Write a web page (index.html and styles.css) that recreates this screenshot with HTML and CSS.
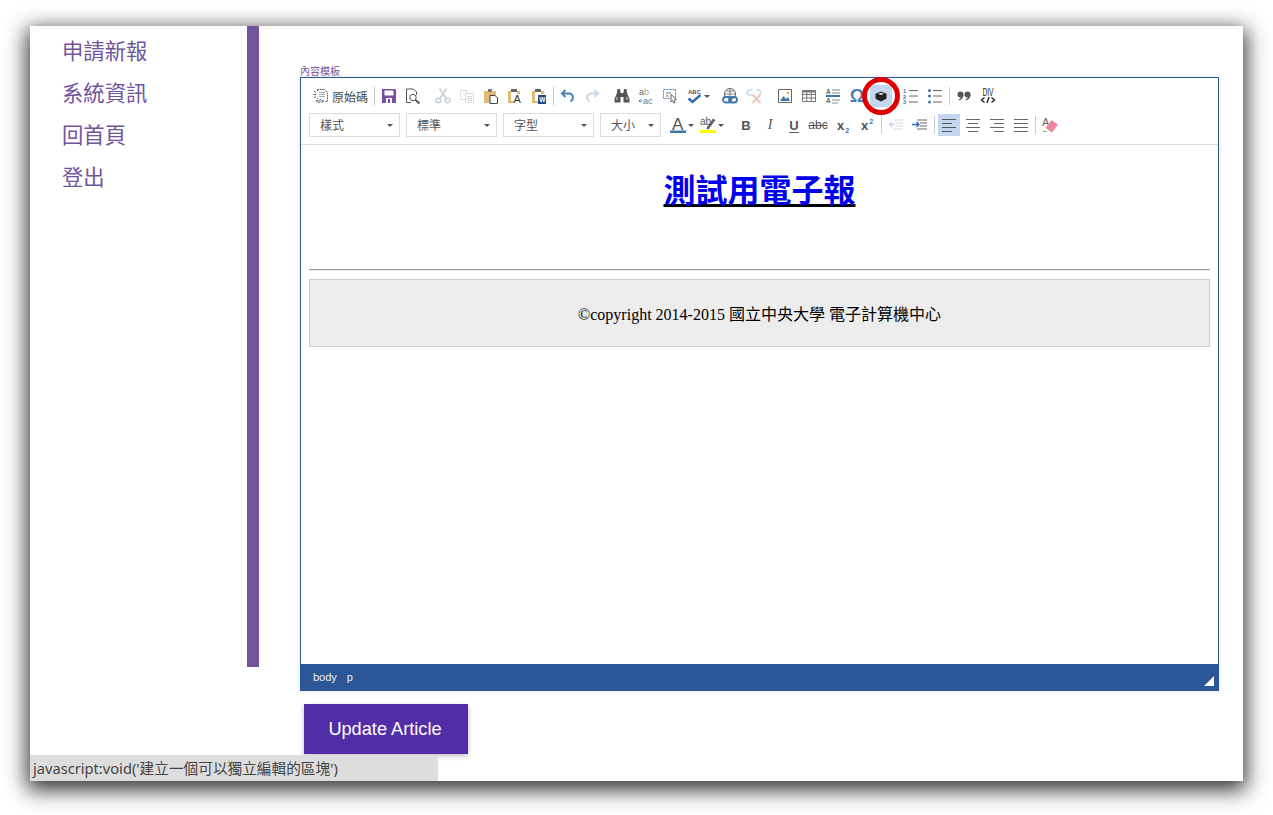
FILE: index.html
```html
<!DOCTYPE html>
<html lang="zh-Hant">
<head>
  <meta charset="UTF-8" />
  <title>內容模板</title>
  <link rel="stylesheet" href="styles.css">
</head>
<body>
  <div class="window">
    <nav class="sidebar">
      <a href="#">申請新報</a>
      <a href="#">系統資訊</a>
      <a href="#">回首頁</a>
      <a href="#">登出</a>
    </nav>

    <main class="main">
      <label class="field-label">內容模板</label>
      <div class="editor">
        <div class="toolbar">
          <div class="row">
            <span class="btn source">
              <svg width="16" height="16" viewBox="0 0 16 16" fill="none" stroke="#555"><path d="M4.500 1.500h7l3 3v9h-2M4.500 1.500v2M4.500 10v1" stroke-dasharray="1.500 .8"/><path d="M1 3l2 1.500M.5 6.500h3M1 10l2-1.500" stroke-width=".9"/><path d="M6.500 4.500h5M6.500 6.500h6M6.500 8.500h6" stroke-dasharray="1 1"/><text x="2.500" y="15" class="tiny" fill="#333" stroke="none">&lt;/&gt;</text></svg>
              <span>原始碼</span>
            </span>
            <i class="sep"></i>
            <span class="btn"><svg width="16" height="16" viewBox="0 0 16 16"><path d="M1 1h13l1 1v13H1z" fill="#7a4ea3"/><path d="M3.500 2.500h9v5h-9z" fill="#fff"/><path d="M5 10h6v5H5z" fill="#fff"/><path d="M7 11h2v4H7z" fill="#7a4ea3"/></svg></span>
            <span class="btn"><svg width="16" height="16" viewBox="0 0 16 16" fill="none" stroke="#555"><path d="M6 14.500H1.500V1h7l3 3v3"/><circle cx="8" cy="9.500" r="3.200"/><path d="M10.500 12l4 3.500" stroke-width="2"/></svg></span>

            <span class="gap g6"></span>
            <span class="btn"><svg width="16" height="16" viewBox="0 0 16 16" fill="none" stroke="#c3d2e2" stroke-width="1.500"><circle cx="3.500" cy="12.500" r="2.300"/><circle cx="12.500" cy="12.500" r="2.300"/><path d="M5 10.500L11.500 .5M11 10.500L4.500 .5" stroke="#d4d4d4" stroke-width="2"/></svg></span>
            <span class="btn"><svg width="16" height="16" viewBox="0 0 16 16" fill="#fff" stroke="#dcdcdc"><path d="M1.500 2.500h6v9h-6z"/><path d="M6.500 5.500h8v9h-8z"/><path d="M8 8.500h5M8 10.500h5M8 12.500h5" stroke="#c9d7e6"/></svg></span>
            <span class="btn"><svg width="16" height="16" viewBox="0 0 16 16"><path d="M1 3h12v12H1z" fill="#e2b976"/><path d="M5 1h4v3H5z" fill="#777"/><path d="M7 7.500h5l2.500 2.500v5.500H7z" fill="#fff" stroke="#444"/></svg></span>
            <span class="btn"><svg width="16" height="16" viewBox="0 0 16 16"><path d="M1 3h3v12H1zM1 13h6v2H1zM10 3h3v3h-3z" fill="#e2b976"/><path d="M1 3h12v1H1z" fill="#e2b976"/><path d="M4 1h6v3H4z" fill="#666"/><text x="6.500" y="15" class="letter" fill="#333">A</text></svg></span>
            <span class="btn"><svg width="16" height="16" viewBox="0 0 16 16"><path d="M1 3h3v12H1zM1 13h6v2H1zM10 3h3v3h-3z" fill="#e2b976"/><path d="M1 3h12v1H1z" fill="#e2b976"/><path d="M4 1h6v3H4z" fill="#666"/><path d="M7 7h8v9H7z" fill="#234a8b"/><text x="8.200" y="14" class="tiny-b" fill="#fff">W</text></svg></span>
            <i class="sep"></i>
            <span class="btn"><svg width="16" height="16" viewBox="0 0 16 16" fill="none" stroke="#4a80b8" stroke-width="2"><path d="M5.500 2L2 5.500 5.500 9"/><path d="M2.500 5.500H9a4 4 0 0 1 4 4c0 2-1 3-2.500 4"/></svg></span>
            <span class="btn"><svg width="16" height="16" viewBox="0 0 16 16" fill="none" stroke="#c7d8ea" stroke-width="2"><path d="M10.500 2L14 5.500 10.500 9"/><path d="M13.500 5.500H7a4 4 0 0 0-4 4c0 2 1 3 2.500 4"/></svg></span>

            <span class="gap g6"></span>
            <span class="btn"><svg width="16" height="16" viewBox="0 0 16 16" fill="#555"><path d="M3.500 1h2.500l.5 3.500v.5h3v-.5l.5-3.500h2.500l.5 4 2.500 6v3.500H9.500V9h-3v5.500H.5V11L3 5z"/><path d="M2 9h2v3H2zM12 9h2v3h-2z" fill="#999"/></svg></span>
            <span class="btn"><svg width="16" height="16" viewBox="0 0 16 16"><text x="1" y="7" class="swap" fill="#666">a<tspan fill="#aaa">b</tspan></text><text x="5" y="16" class="swap" fill="#4a80b8">ac</text><path d="M1 13h3.500M2.500 11.500L1 13l1.500 1.500" fill="none" stroke="#4a80b8"/></svg></span>
            <span class="btn"><svg width="16" height="16" viewBox="0 0 16 16" fill="none"><path d="M1.500 1.500h12v9h-12z" stroke="#4a80b8" stroke-dasharray="2 1"/><path d="M4 5h5M4 8h3" stroke="#777"/><path d="M9 6.500l5.500 5-2.500.5 1 2.500-1.500.500-1-2.500L9 14z" fill="#fff" stroke="#666"/></svg></span>
            <span class="btn wide"><svg width="16" height="16" viewBox="0 0 16 16" fill="none"><text x="1" y="6" class="tiny" fill="#555">ABC</text><path d="M1.500 10.500L5.500 14 13.500 7" stroke="#2f6db0" stroke-width="2.400"/></svg><b class="arrow"></b></span>

            <span class="gap g4"></span>
            <span class="btn"><svg width="16" height="16" viewBox="0 0 16 16" fill="none"><circle cx="8" cy="6" r="5.500" stroke="#666"/><path d="M2.500 6h11M8 .5v11M4 2.500c2 1 6 1 8 0" stroke="#666" stroke-width=".8"/><rect x="1" y="9" width="8" height="5.500" rx="2.700" fill="#fff" stroke="#3d76b0" stroke-width="1.800"/><rect x="7" y="9" width="8" height="5.500" rx="2.700" fill="none" stroke="#3d76b0" stroke-width="1.800"/></svg></span>
            <span class="btn"><svg width="16" height="16" viewBox="0 0 16 16" fill="none"><path d="M6.500 2H3.500a2.500 2.500 0 0 0 0 5H6M10 2h2.500a2.500 2.500 0 0 1 1 4.500" stroke="#c7d8ea" stroke-width="1.700"/><path d="M6.500 6.500l8 8.500M14.500 6.500l-8 8.500" stroke="#f2c6bd" stroke-width="2"/></svg></span>

            <span class="gap g7"></span>
            <span class="btn"><svg width="16" height="16" viewBox="0 0 16 16"><path d="M1.500 1.500h13v13h-13z" fill="#fff" stroke="#666"/><path d="M3 13l3.500-5 2.500 3 2-2 2 4z" fill="#3f78b2"/><circle cx="11" cy="5" r="1.500" fill="#e8b35c"/></svg></span>
            <span class="btn"><svg width="16" height="16" viewBox="0 0 16 16" fill="none" stroke="#777"><path d="M1.500 2.500h13v11h-13zM1.500 6.500h13M1.500 10h13M5.800 2.500v11M10.200 2.500v11"/><path d="M1.500 3.500h13" stroke-width="2"/></svg></span>
            <span class="btn"><svg width="16" height="16" viewBox="0 0 16 16" fill="none"><text x="1" y="6" class="tiny-b" fill="#666">A</text><path d="M7 2h8M7 5h8M7 12h8M7 15h6" stroke="#888"/><path d="M1 8h14" stroke="#3d76b0" stroke-width="2"/><text x="1" y="15" class="tiny-b" fill="#666">A</text></svg></span>
            <span class="btn omega">Ω</span>
            <span class="btn on">
              <svg width="16" height="16" viewBox="0 0 16 16"><path d="M8 3.500l5.500 2.200v5L8 13.500l-5.500-2.800v-5z" fill="#222"/><path d="M5 5.800L8 4.700l3 1.100-3 1.200z" fill="#dfe7f5"/></svg>
              <span class="marker"></span>
            </span>

            <span class="gap g6"></span>
            <span class="btn"><svg width="16" height="16" viewBox="0 0 16 16" fill="none"><text x="0" y="5" class="num" fill="#3d76b0">1</text><text x="0" y="10.500" class="num" fill="#3d76b0">2</text><text x="0" y="16" class="num" fill="#3d76b0">3</text><path d="M6 2.500h9M6 8h9M6 14h9" stroke="#666"/></svg></span>
            <span class="btn"><svg width="16" height="16" viewBox="0 0 16 16" fill="none"><path d="M6 2.500h9M6 8h9M6 14h9" stroke="#666"/><circle cx="2.500" cy="2.500" r="1.500" fill="#3d76b0"/><circle cx="2.500" cy="8" r="1.500" fill="#3d76b0"/><circle cx="2.500" cy="14" r="1.500" fill="#3d76b0"/></svg></span>
            <i class="sep"></i>
            <span class="btn"><svg width="16" height="16" viewBox="0 0 16 16" fill="#555"><circle cx="4.500" cy="6.500" r="3"/><circle cx="11.500" cy="6.500" r="3"/><path d="M7.500 6.500c0 3-1.500 5-4.500 6l-.5-1c1.500-.7 2.500-1.800 2.500-3zM14.500 6.500c0 3-1.500 5-4.500 6l-.5-1c1.500-.7 2.500-1.800 2.500-3z"/></svg></span>
            <span class="btn"><svg width="16" height="16" viewBox="0 0 16 16" fill="none" stroke="#222"><text x="2.500" y="7.500" class="div-label" fill="#222" stroke="none" textLength="11" lengthAdjust="spacingAndGlyphs">DIV</text><path d="M4.500 9.500L1.500 12l3 2.500M11.500 9.500l3 2.500-3 2.500" stroke-width="1.400"/><path d="M9 9L7 15" stroke-width="1.400"/></svg></span>
          </div>

          <div class="row">
            <span class="combo">樣式</span>
            <span class="combo">標準</span>
            <span class="combo">字型</span>
            <span class="combo small-combo">大小</span>
            <span class="gap g6"></span>
            <span class="btn color"><svg width="16" height="16" viewBox="0 0 16 16"><text x="2" y="13" class="big-a" fill="#555">A</text><path d="M0 13.500h16v2.500H0z" fill="#3d76b0"/></svg><b class="arrow"></b></span>
            <span class="btn color"><svg width="16" height="16" viewBox="0 0 16 16"><text x="0" y="8" class="small" fill="#555">ab</text><path d="M6 11.500l7-10 2.500 1.500-7 9.500z" fill="#666"/><path d="M0 13h16v3H0z" fill="#ff0"/></svg><b class="arrow"></b></span>
            <span class="gap g7"></span>
            <span class="btn text-btn"><b>B</b></span>
            <span class="btn text-btn"><em class="slant">I</em></span>
            <span class="btn text-btn"><b class="under">U</b></span>
            <span class="btn text-btn"><span class="strike">abc</span></span>
            <span class="gap g1"></span>
            <span class="btn text-btn script"><span><b>x</b><sub>2</sub></span></span>
            <span class="btn text-btn script"><span><b>x</b><sup>2</sup></span></span>
            <i class="sep"></i>
            <span class="btn"><svg width="16" height="16" viewBox="0 0 16 16" fill="none" stroke="#d5d5d5"><path d="M6 3h9M8 6h7M8 9h7M6 12h9"/><path d="M7 7.500H1M4 5L1.500 7.500 4 10" stroke="#c7d8ea" stroke-width="1.400"/></svg></span>
            <span class="btn"><svg width="16" height="16" viewBox="0 0 16 16" fill="none" stroke="#666"><path d="M5 3h10M8 6h7M8 9h7M5 12h10"/><path d="M0 7.500h7M4.500 5L7 7.500 4.500 10" stroke="#2f6db0" stroke-width="1.400"/></svg></span>
            <i class="sep"></i>
            <span class="btn on"><svg width="16" height="16" viewBox="0 0 16 16" stroke="#555"><path d="M1 2.500h14M1 6.500h10M1 10.500h14M1 14.500h10"/></svg></span>
            <span class="btn"><svg width="16" height="16" viewBox="0 0 16 16" stroke="#666"><path d="M1 2.500h14M3 6.500h10M1 10.500h14M3 14.500h10"/></svg></span>
            <span class="btn"><svg width="16" height="16" viewBox="0 0 16 16" stroke="#666"><path d="M1 2.500h14M5 6.500h10M1 10.500h14M5 14.500h10"/></svg></span>
            <span class="btn"><svg width="16" height="16" viewBox="0 0 16 16" stroke="#666"><path d="M1 2.500h14M1 6.500h14M1 10.500h14M1 14.500h14"/></svg></span>
            <i class="sep"></i>
            <span class="btn"><svg width="16" height="16" viewBox="0 0 16 16"><text x="0" y="9" class="letter" fill="#666">A</text><path d="M9.500 3l6.500 4.500-6 8-6.500-4.500z" fill="#e88a9c"/><path d="M1 14h4v1H1z" fill="#999"/></svg></span>
          </div>
        </div>

        <div class="content">
          <h1><a href="#">測試用電子報</a></h1>
          <hr>
          <div class="copyright">©copyright 2014-2015 國立中央大學 電子計算機中心</div>
        </div>

        <div class="statusbar">
          <span>body</span>
          <span>p</span>
          <i class="grip"></i>
        </div>
      </div>

      <a class="update" href="#">Update Article</a>
    </main>

    <div class="link-status">javascript:void('建立一個可以獨立編輯的區塊')</div>
  </div>
</body>
</html>
```

FILE: styles.css
```css
* {
  box-sizing: border-box;
}

body {
  margin: 0;
  min-height: 100vh;
  padding: 26px 30px 0;
  background: #fff;
  font-family: "Liberation Sans", "Noto Sans CJK TC", sans-serif;
}

.window {
  position: relative;
  display: flex;
  align-items: flex-start;
  width: 1213px;
  height: 755px;
  background: #fff;
  box-shadow: 0 6px 20px 3px rgba(0, 0, 0, 0.8);
}

/* left menu */
.sidebar {
  flex: none;
  width: 229px;
  height: 641px;
  padding: 3px 0 0 32px;
  border-right: 12px solid #71559b;
}

.sidebar a {
  display: block;
  height: 42px;
  line-height: 42px;
  font-family: "Noto Sans CJK TC", sans-serif;
  font-size: 21.330px;
  color: #71559b;
  text-decoration: none;
}

.main {
  flex: none;
  width: 960px;
  padding: 39px 0 0 41px;
}

.field-label {
  display: block;
  height: 12px;
  line-height: 12px;
  font-size: 10px;
  font-family: "Noto Sans CJK TC", sans-serif;
  color: #71559b;
}

.editor {
  display: flex;
  flex-direction: column;
  width: 919px;
  height: 614px;
  border: 1px solid #2b5797;
  border-bottom: 0;
  box-shadow: 0 0 4px rgba(43, 87, 151, 0.2);
}

/* toolbar */
.toolbar {
  flex: none;
  height: 67px;
  padding: 6px 0 0 8px;
  border-bottom: 1px solid #ddd;
  display: flex;
  flex-direction: column;
  gap: 5px;
}

.row {
  display: flex;
  align-items: center;
  height: 24px;
}

.row svg {
  overflow: visible;
}

.btn {
  position: relative;
  flex: none;
  display: flex;
  align-items: center;
  justify-content: center;
  width: 24px;
  height: 24px;
  color: #555;
}

.btn.on {
  background: #c5d6ef;
  box-shadow: inset 0 0 0 1px #fff;
}

.btn.source {
  width: 63px;
  justify-content: flex-start;
  gap: 3px;
  padding-left: 4px;
  font-family: "Noto Sans CJK TC", sans-serif;
  font-size: 12px;
  color: #484848;
}

.btn.wide {
  width: 32px;
  gap: 1px;
}

.btn.color {
  width: 30px;
  gap: 2px;
}

.btn.omega {
  font-family: "Liberation Sans", sans-serif;
  font-size: 18px;
  font-weight: bold;
  color: #4a80b8;
}

.btn.text-btn {
  font-family: "Liberation Sans", sans-serif;
  font-size: 13px;
  color: #555;
}

.btn .slant {
  font-family: "Liberation Serif", serif;
  font-size: 14px;
}

.btn .under {
  text-decoration: underline;
  text-underline-offset: 2px;
}

.btn .strike {
  font-size: 12px;
  text-decoration: line-through;
}

.btn.script sub,
.btn.script sup {
  font-size: 7px;
  color: #3d76b0;
  font-weight: bold;
  line-height: 0;
  margin-left: 1px;
}

.arrow {
  display: block;
  width: 0;
  height: 0;
  border: 3px solid transparent;
  border-top: 3px solid #555;
  border-bottom: 0;
}

.sep {
  flex: none;
  width: 1px;
  height: 18px;
  margin: 0 2px;
  background: #ccc;
}

.gap {
  flex: none;
}

.g1 { width: 1px; }
.g4 { width: 4px; }
.g6 { width: 6px; }
.g7 { width: 7px; }

.combo {
  position: relative;
  flex: none;
  width: 91px;
  height: 24px;
  margin-right: 6px;
  padding-left: 10px;
  line-height: 22px;
  border: 1px solid #ddd;
  font-family: "Noto Sans CJK TC", sans-serif;
  font-size: 12px;
  color: #555;
}

.combo.small-combo {
  width: 61px;
  margin-right: 0;
}

.combo::after {
  content: "";
  position: absolute;
  right: 6px;
  top: 10px;
  border: 3px solid transparent;
  border-top: 3px solid #555;
  border-bottom: 0;
}

/* svg lettering */
svg text {
  font-family: "Liberation Sans", sans-serif;
}

.tiny { font-size: 6px; font-weight: bold; }
.tiny-b { font-size: 6.500px; font-weight: bold; }
.div-label { font-size: 10px; }
.num { font-size: 5.500px; font-weight: bold; }
.small { font-size: 10px; }
.swap { font-size: 9px; }
.letter { font-size: 11px; }
.big-a { font-size: 17px; }

/* the red ring drawn round the create-div button */
.marker {
  position: absolute;
  left: -7px;
  top: -7px;
  width: 38px;
  height: 38px;
  border: 5px solid #dc0000;
  border-radius: 50%;
}

/* editing area */
.content {
  flex: 1;
  padding: 27px 8px 0;
  font-family: "Liberation Serif", "Noto Sans CJK TC", serif;
  font-size: 16px;
  color: #000;
}

.content h1 {
  margin: 0;
  height: 38px;
  line-height: 38px;
  text-align: center;
  font-family: "Liberation Sans", "Noto Sans CJK TC", sans-serif;
  font-size: 32px;
  font-weight: bold;
}

.content h1 a {
  color: #00e;
  text-decoration: underline #000 3px;
  text-underline-offset: 2px;
}

.content hr {
  margin: 59px 0 0;
  height: 2px;
  border: 0;
  border-top: 1px solid #999;
  border-bottom: 1px solid #eee;
}

.copyright {
  height: 68px;
  margin-top: 8px;
  padding-top: 1px;
  line-height: 68px;
  text-align: center;
  background: #ededed;
  border: 1px solid #ccc;
}

.statusbar {
  position: relative;
  flex: none;
  display: flex;
  gap: 10px;
  align-items: center;
  height: 27px;
  margin: 0 -1px;
  padding: 0 0 2px 13px;
  background: #2b5797;
  color: #e8eef7;
  font-size: 11px;
}

.grip {
  position: absolute;
  right: 5px;
  bottom: 5px;
  width: 0;
  height: 0;
  border-left: 10px solid transparent;
  border-bottom: 10px solid #fff;
}

.update {
  display: block;
  width: 164px;
  height: 50px;
  margin: 13px 0 0 4px;
  padding-right: 2px;
  line-height: 50px;
  text-align: center;
  background: #512da8;
  color: #fff;
  font-size: 18.200px;
  text-decoration: none;
  box-shadow: 0 2px 5px rgba(0, 0, 0, 0.26);
}

.link-status {
  position: absolute;
  left: 0;
  bottom: 0;
  width: 408px;
  height: 26px;
  padding-left: 3px;
  line-height: 26px;
  background: #ddd;
  border-top-right-radius: 3px;
  font-family: "Noto Sans", "Noto Sans CJK TC", sans-serif;
  font-size: 14.670px;
  color: #444;
  white-space: nowrap;
}
```
